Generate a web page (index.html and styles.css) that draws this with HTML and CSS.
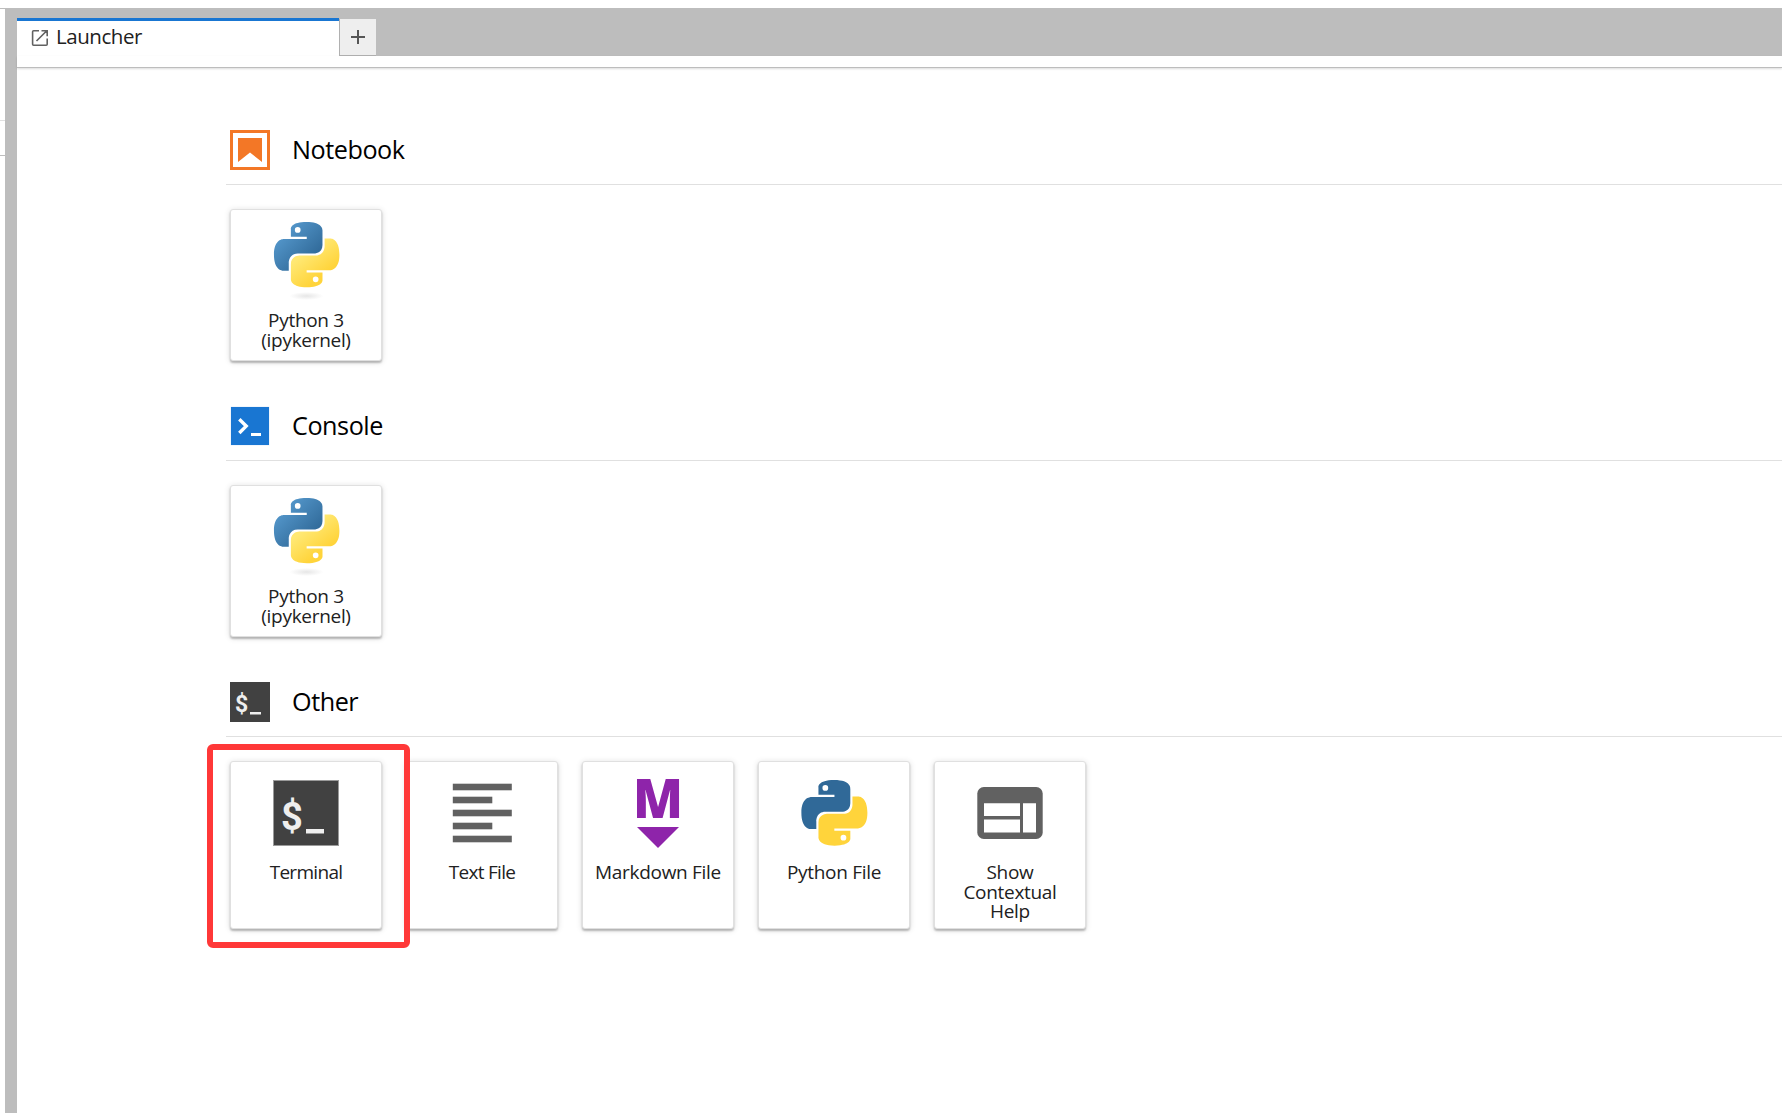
FILE: index.html
```html
<!DOCTYPE html>
<html lang="en">
<head>
  <meta charset="UTF-8" />
  <title>Launcher</title>
  <link rel="stylesheet" href="styles.css">
</head>
<body>
  <svg class="defs" width="0" height="0">
    <defs>
      <linearGradient id="blue" x1="0" y1="0" x2="0.8" y2="0.8">
        <stop offset="0.1" stop-color="#5a9fd4" />
        <stop offset="1" stop-color="#306998" />
      </linearGradient>
      <linearGradient id="yellow" x1="0.3" y1="0.3" x2="0.65" y2="0.75">
        <stop offset="0" stop-color="#ffe873" />
        <stop offset="1" stop-color="#ffd43b" />
      </linearGradient>
      <radialGradient id="shade">
        <stop offset="0" stop-color="#b8b8b8" stop-opacity="0.35" />
        <stop offset="1" stop-color="#b8b8b8" stop-opacity="0" />
      </radialGradient>
      <path id="snake-top" d="M99.75 67.47C71.72 67.47 73.47 79.63 73.47 79.63L73.5 92.22H100.25V96H62.88C62.88 96 44.94 93.97 44.94 122.25C44.94 150.53 60.59 149.53 60.59 149.53H69.94V136.41C69.94 136.41 69.43 120.75 85.34 120.75H111.88C111.88 120.75 126.78 120.99 126.78 106.34V82.13C126.78 82.13 129.04 67.47 99.75 67.47ZM85 75.94A4.81 4.81 0 1 1 85 85.56A4.81 4.81 0 1 1 85 75.94Z" />
      <path id="snake-bottom" d="M100.55 177.31C128.58 177.31 126.83 165.16 126.83 165.16L126.8 152.56H100.05V148.78H137.42C137.42 148.78 155.36 150.82 155.36 122.53C155.36 94.25 139.7 95.25 139.7 95.25H130.36V108.38C130.36 108.38 130.86 124.03 114.95 124.03H88.42C88.42 124.03 73.51 123.79 73.51 138.44V162.66C73.51 162.66 71.25 177.31 100.55 177.31ZM115.3 168.85A4.81 4.81 0 1 1 115.3 159.22A4.81 4.81 0 1 1 115.3 168.85Z" />
    </defs>
  </svg>

  <div class="top-strip"></div>
  <div class="shell">
    <div class="sidebar">
      <div class="sidebar-head"></div>
      <div class="sidebar-row"></div>
    </div>
    <div class="dock">
      <div class="tab-bar">
        <div class="tab">
          <svg class="tab-icon" width="18" height="18" viewBox="0 0 18 18">
            <path d="M8 1.8H2.6Q1.6 1.8 1.6 2.8V15.2Q1.6 16.2 2.6 16.2H15.2Q16.2 16.2 16.2 15.2V9.5M5.5 12L15.5 2M10.5 1.8H16.2V7.2" />
          </svg>
          <span class="tab-label">Launcher</span>
        </div>
        <div class="add-tab">
          <svg width="14" height="14" viewBox="0 0 14 14"><path d="M7 0V14M0 7H14" /></svg>
        </div>
      </div>
      <div class="toolbar"></div>

      <div class="launcher">
        <section class="section">
          <div class="section-header">
            <svg width="40" height="40" viewBox="0 0 40 40">
              <rect x="1.5" y="1.5" width="37" height="37" fill="none" stroke="#f37726" stroke-width="3" />
              <path d="M8 8H32V32L20 22.5L8 32Z" fill="#f37726" />
            </svg>
            <h2>Notebook</h2>
          </div>
          <div class="cards">
            <div class="card">
              <svg class="card-icon kernel" width="66" height="78" viewBox="0 0 66 78">
                <g transform="translate(-25.7 -40) scale(0.593)">
                  <use href="#snake-top" fill="url(#blue)" />
                  <use href="#snake-bottom" fill="url(#yellow)" />
                </g>
                <ellipse cx="33.5" cy="74" rx="17" ry="4" fill="url(#shade)" />
              </svg>
              <p class="card-label">Python 3<br>(ipykernel)</p>
            </div>
          </div>
        </section>

        <section class="section">
          <div class="section-header">
            <svg width="40" height="40" viewBox="0 0 40 40">
              <rect x="0.7" y="0.7" width="38.6" height="38.6" fill="#cfe2f6" />
              <rect x="1" y="1" width="38" height="38" fill="#1976d2" />
              <path d="M9.3 13.3L16.2 20.1L9.3 27" fill="none" stroke="#fff" stroke-width="3.4" />
              <rect x="21" y="27" width="10" height="3" fill="#fff" />
            </svg>
            <h2>Console</h2>
          </div>
          <div class="cards">
            <div class="card">
              <svg class="card-icon kernel" width="66" height="78" viewBox="0 0 66 78">
                <g transform="translate(-25.7 -40) scale(0.593)">
                  <use href="#snake-top" fill="url(#blue)" />
                  <use href="#snake-bottom" fill="url(#yellow)" />
                </g>
                <ellipse cx="33.5" cy="74" rx="17" ry="4" fill="url(#shade)" />
              </svg>
              <p class="card-label">Python 3<br>(ipykernel)</p>
            </div>
          </div>
        </section>

        <section class="section">
          <div class="section-header">
            <svg width="40" height="40" viewBox="0 0 40 40">
              <rect width="40" height="40" fill="#414141" />
              <text class="dollar" x="5" y="29.7" font-size="23">$</text>
              <rect x="20" y="30" width="11" height="2.5" fill="#eee" />
            </svg>
            <h2>Other</h2>
          </div>
          <div class="cards tall">
            <div class="card highlighted">
              <svg class="card-icon" width="66" height="66" viewBox="0 0 66 66">
                <rect x="0.5" y="0.5" width="65" height="65" fill="#414141" stroke="#9a9a9a" />
                <text class="dollar" x="8" y="49.5" font-size="38">$</text>
                <rect x="33" y="49" width="18" height="4.5" fill="#eee" />
              </svg>
              <p class="card-label tight">Terminal</p>
            </div>
            <div class="card">
              <svg class="card-icon" width="66" height="66" viewBox="0 0 66 66" fill="#616161">
                <rect x="3.8" y="3.7" width="59" height="6.6" />
                <rect x="3.8" y="16.7" width="39.5" height="6.6" />
                <rect x="3.8" y="29.7" width="59" height="6.6" />
                <rect x="3.8" y="42.7" width="39.5" height="6.6" />
                <rect x="3.8" y="55.7" width="59" height="6.6" />
              </svg>
              <p class="card-label tight">Text File</p>
            </div>
            <div class="card">
              <svg class="card-icon" width="66" height="66" viewBox="0 0 66 66" fill="#8e24aa">
                <text class="markdown" x="8" y="38" textLength="50" lengthAdjust="spacingAndGlyphs">M</text>
                <path d="M12 47H54L33 68Z" />
              </svg>
              <p class="card-label">Markdown File</p>
            </div>
            <div class="card">
              <svg class="card-icon" width="66" height="66" viewBox="0 0 66 66">
                <g transform="translate(-26.5 -40.4) scale(0.598)">
                  <use href="#snake-top" fill="#306998" />
                  <use href="#snake-bottom" fill="#ffd43b" />
                </g>
              </svg>
              <p class="card-label">Python File</p>
            </div>
            <div class="card">
              <svg class="card-icon" width="66" height="66" viewBox="0 0 66 66">
                <rect x="0.3" y="7" width="65.4" height="52" rx="6.5" fill="#616161" />
                <path d="M7 23.3H43V36H7ZM7 39.5H43V52.5H7ZM46 23.3H59V52.5H46Z" fill="#fff" />
              </svg>
              <p class="card-label">Show<br>Contextual<br>Help</p>
            </div>
          </div>
        </section>
      </div>
    </div>
  </div>
</body>
</html>
```

FILE: styles.css
```css
*,
*::after {
  box-sizing: border-box;
}

body {
  margin: 0;
  height: 100vh;
  display: flex;
  flex-direction: column;
  overflow: hidden;
  background: #fff;
  font-family: "Segoe UI", "Open Sans", sans-serif;
  color: #212121;
}

.defs {
  position: absolute;
}

.top-strip {
  height: 8px;
}

.shell {
  flex: 1;
  display: flex;
}

.sidebar {
  width: 5px;
  border-top: 1px solid #bdbdbd;
}

.sidebar-head {
  height: 112px;
  border-bottom: 1px solid #e0e0e0;
}

.sidebar-row {
  height: 35px;
  border-bottom: 1px solid #bdbdbd;
}

.dock {
  flex: 1;
  display: flex;
  flex-direction: column;
  border-left: 12px solid #bdbdbd;
}

.tab-bar {
  display: flex;
  height: 48px;
  padding-top: 10px;
  background: #bdbdbd;
}

.tab {
  display: flex;
  width: 322px;
  padding: 0 14px;
  border-top: 3px solid #1976d2;
  background: #fff;
}

.tab-icon {
  margin-top: 8px;
  fill: none;
  stroke: #616161;
  stroke-width: 1.6;
}

.tab-label {
  margin-left: 7px;
  font-size: 20.5px;
  line-height: 31px;
  letter-spacing: -0.45px;
}

.add-tab {
  display: flex;
  align-items: center;
  justify-content: center;
  width: 37px;
  height: 37px;
  margin-top: 1px;
  border-left: 1px solid #b0b0b0;
  border-bottom: 1px solid #b0b0b0;
  background: #eee;
}

.add-tab svg {
  stroke: #555;
  stroke-width: 2;
}

.toolbar {
  height: 12px;
  border-bottom: 1px solid #bdbdbd;
  box-shadow: 0 1px 2px rgba(0, 0, 0, 0.14);
}

.launcher {
  flex: 1;
  padding: 51px 0 0 209px;
}

.section {
  margin-bottom: 34px;
}

.section-header {
  display: flex;
  align-items: center;
  height: 66px;
  padding: 0 0 3px 4px;
  border-bottom: 1px solid #e0e0e0;
}

.section-header h2 {
  margin: 0 0 2px 22px;
  font-size: 25.2px;
  font-weight: 400;
  letter-spacing: -0.45px;
  color: #000;
}

.cards {
  display: flex;
  gap: 24px;
  padding: 24px 0 0 4px;
}

.card {
  position: relative;
  width: 152px;
  height: 152px;
  border: 1px solid #e0e0e0;
  border-radius: 3px;
  background: #fff;
  box-shadow: 0 2px 2px rgba(0, 0, 0, 0.24), 0 1px 6px rgba(0, 0, 0, 0.14);
  text-align: center;
}

.tall .card {
  height: 168px;
}

.card-icon {
  display: block;
  margin: 18px auto 17px;
  overflow: visible;
}

.card-icon.kernel {
  margin: 12px auto 11px;
}

.card-label {
  margin: 0;
  font-size: 19px;
  line-height: 19.5px;
  letter-spacing: -0.3px;
}

.card-label.tight {
  letter-spacing: -0.7px;
}

.dollar {
  font-family: Roboto, sans-serif;
  font-weight: 700;
  fill: #eee;
}

.markdown {
  font-family: "Open Sans", sans-serif;
  font-size: 55px;
  font-weight: 800;
}

/* red frame around the Terminal card */
.highlighted::after {
  content: "";
  position: absolute;
  z-index: 1;
  top: -18px;
  left: -24px;
  width: 203px;
  height: 204px;
  border: 6px solid #ff3838;
  border-radius: 6px;
}
```
